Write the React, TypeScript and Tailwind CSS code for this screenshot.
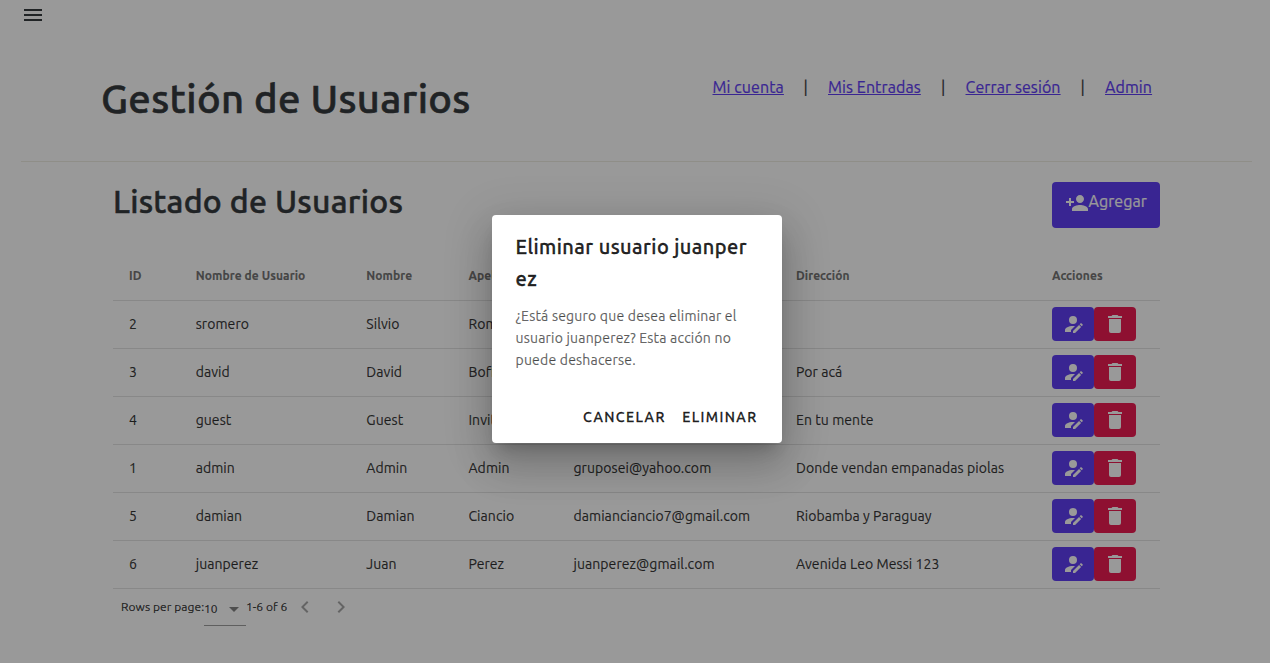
import React from "react";

const Icon = ({ d, className = "size-6" }: { d: string; className?: string }) => (
  <svg viewBox="0 0 24 24" fill="currentColor" className={className}>
    <path d={d} />
  </svg>
);

const ICONS = {
  menu: "M3 18h18v-2H3v2zm0-5h18v-2H3v2zm0-7v2h18V6H3z",
  add: "M15 12c2.21 0 4-1.79 4-4s-1.79-4-4-4-4 1.79-4 4 1.79 4 4 4zm-9-2V7H4v3H1v2h3v3h2v-3h3v-2H6zm9 4c-2.67 0-8 1.34-8 4v2h16v-2c0-2.66-5.33-4-8-4z",
  edit: "M21.7,13.35L20.7,14.35L18.65,12.3L19.65,11.3C19.86,11.09 20.21,11.08 20.42,11.3L21.7,12.58C21.92,12.79 21.91,13.14 21.7,13.35M12,18.94L18.06,12.88L20.11,14.93L14.06,21H12V18.94M12,14C7.58,14 4,15.79 4,18V20H10V18.11L14,14.11C13.34,14.03 12.67,14 12,14M12,4A4,4 0 0,0 8,8A4,4 0 0,0 12,12A4,4 0 0,0 16,8A4,4 0 0,0 12,4Z",
  trash: "M19,4H15.5L14.5,3H9.5L8.5,4H5V6H19M6,19A2,2 0 0,0 8,21H16A2,2 0 0,0 18,19V7H6V19Z",
  left: "M15.41 7.41L14 6l-6 6 6 6 1.41-1.41L10.83 12z",
  right: "M10 6L8.59 7.41 13.17 12l-4.58 4.59L10 18l6-6z",
};

const LINKS = [
  { label: "Mi cuenta", width: "w-[71px]" },
  { label: "Mis Entradas", width: "w-[93px]" },
  { label: "Cerrar sesión", width: "w-[95px]" },
  { label: "Admin", width: "w-[47px]" },
];

const HEADS = ["ID", "Nombre de Usuario", "Nombre", "Apellido", "Email", "Dirección", "Acciones"];

const ROWS = [
  ["2", "sromero", "Silvio", "Romero", "", ""],
  ["3", "david", "David", "Boffi", "", "Por acá"],
  ["4", "guest", "Guest", "Invitado", "", "En tu mente"],
  ["1", "admin", "Admin", "Admin", "gruposei@yahoo.com", "Donde vendan empanadas piolas"],
  ["5", "damian", "Damian", "Ciancio", "damianciancio7@gmail.com", "Riobamba y Paraguay"],
  ["6", "juanperez", "Juan", "Perez", "juanperez@gmail.com", "Avenida Leo Messi 123"],
];

const GRID = "grid grid-cols-[66.7px_170.6px_102.2px_105px_222.5px_256px_92px] pl-4 whitespace-nowrap";

export default function App() {
  return (
    <div className="relative h-[663px] w-[1270px] overflow-hidden bg-white font-['Ubuntu','Noto_Sans',sans-serif] text-[#212529] [-webkit-text-stroke:0.2px]">
      <div className="flex h-[30px] items-center pl-[21px]">
        <Icon d={ICONS.menu} />
      </div>

      <header className="mr-[18px] ml-[21px] flex h-[132px] justify-between border-b border-[#eceadf] pr-[100px] pl-[80px]">
        <h1 className="pt-[39px] text-[40px] leading-[60px] font-medium tracking-[0.33px] whitespace-nowrap [-webkit-text-stroke:0.6px]">Gestión de Usuarios</h1>
        <nav className="flex items-start pt-[45px] text-base leading-6 whitespace-nowrap">
          {LINKS.map((l, i) => (
            <React.Fragment key={l.label}>
              {i > 0 && <span className="w-[44.5px] text-center">|</span>}
              <a className={`${l.width} tracking-[0.1px] text-[#4f29f3] underline`}>{l.label}</a>
            </React.Fragment>
          ))}
        </nav>
      </header>

      <main className="mr-[110px] ml-[113px] pt-5">
        <div className="flex h-[69px] justify-between">
          <h2 className="-mt-px text-[32px] leading-10 font-medium tracking-[0.27px] whitespace-nowrap [-webkit-text-stroke:0.5px]">Listado de Usuarios</h2>
          <button className="flex h-[46px] w-[108px] rounded bg-[#4f29f3] pt-[7px] pl-[13px] text-white">
            <Icon d={ICONS.add} className="mt-0.5 size-6 shrink-0" />
            <span className="-ml-[0.5px] text-base leading-6 tracking-[0.05px]">Agregar</span>
          </button>
        </div>

        <div className={`${GRID} h-[50px] border-b border-[#e0e0e0] text-xs leading-[50px] font-bold tracking-[0.08px] text-black/60`}>
          {HEADS.map((h) => <span key={h}>{h}</span>)}
        </div>
        {ROWS.map((r) => (
          <div key={r[0]} className={`${GRID} h-12 items-center border-b border-[#e0e0e0] pb-px text-sm text-black/87`}>
            {r.map((c, i) => <span key={i} className="tracking-[0.07px]">{c}</span>)}
            <span className="-ml-px flex pl-px text-white">
              <button className="flex h-[34px] w-[42px] items-center justify-center rounded bg-[#4f29f3]"><Icon d={ICONS.edit} /></button>
              <button className="flex h-[34px] w-[42px] items-center justify-center rounded bg-[#eb023f]"><Icon d={ICONS.trash} /></button>
            </span>
          </div>
        ))}

        <div className="flex items-start pl-2 text-xs whitespace-nowrap text-black/87">
          <span className="w-[83px] leading-9 tracking-[0.06px]">Rows per page:</span>
          <span className="flex h-[37px] w-[42px] justify-between border-b border-black/42 leading-10">
            10
            <Icon d="M7 10l5 5 5-5z" className="mt-2 size-6 text-black/54" />
          </span>
          <span className="w-[47px] leading-9 tracking-[0.06px]">1-6 of 6</span>
          <Icon d={ICONS.left} className="mt-[6px] size-6 text-black/38" />
          <Icon d={ICONS.right} className="mt-[6px] ml-3 size-6 text-black/38" />
        </div>
      </main>

      <div className="absolute inset-0 bg-[#212121]/46" />

      <div role="dialog" className="absolute top-[215px] left-[492px] h-[228px] w-[290px] rounded bg-white px-[23.5px] text-black/87 shadow-[0_11px_15px_-7px_rgba(0,0,0,0.2),0_24px_38px_3px_rgba(0,0,0,0.14),0_9px_46px_8px_rgba(0,0,0,0.12)]">
        <h3 className="pt-4 text-xl leading-8 font-medium tracking-[0.43px] whitespace-nowrap [-webkit-text-stroke:0.35px]">Eliminar usuario juanper<br />ez</h3>
        <p className="mt-[10px] text-sm leading-[22px] tracking-[0.2px] whitespace-nowrap text-black/60">
          ¿Está seguro que desea eliminar el<br />usuario juanperez? Esta acción no<br />puede deshacerse.
        </p>
        <div className="mt-[28px] flex justify-end gap-[16.5px] pr-px text-sm leading-9 font-medium tracking-[1.4px] [-webkit-text-stroke:0.3px]">
          <button>CANCELAR</button>
          <button>ELIMINAR</button>
        </div>
      </div>
    </div>
  );
}
